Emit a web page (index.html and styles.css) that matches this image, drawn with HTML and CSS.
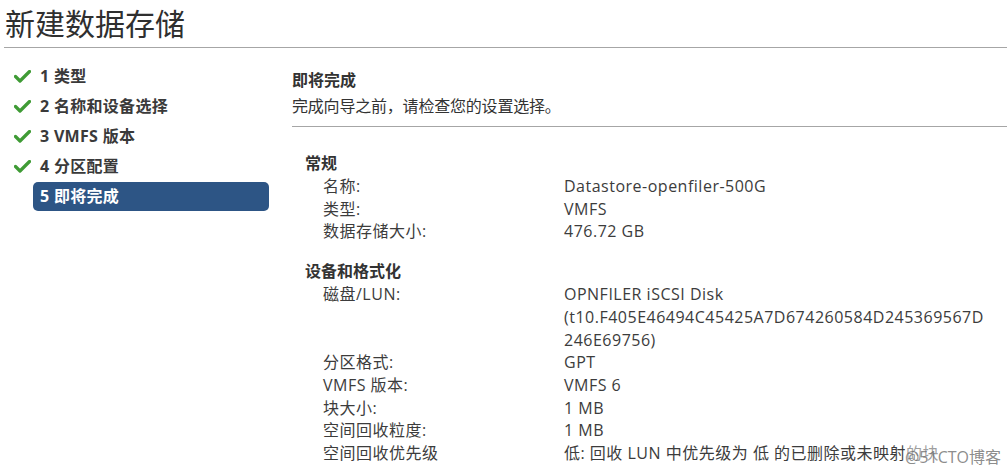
FILE: index.html
```html
<!DOCTYPE html>
<html>

<head>
    <title>新建数据存储</title>
    <meta charset="utf-8" />
    <link rel="stylesheet" href="styles.css">
</head>

<body>
    <div class="page">
        <div class="title">新建数据存储</div>
        <div class="main">
            <ul class="nav">
                <li class="nav-item">
                    <span class="check"><svg width="17" height="13" viewBox="0 0 17 13"><path d="M1.5 6.5 L6 11 L15.5 1.5" fill="none" stroke="#3f9b35" stroke-width="3.2" stroke-linecap="round" stroke-linejoin="round"/></svg></span>
                    <span class="label">1 类型</span>
                </li>
                <li class="nav-item">
                    <span class="check"><svg width="17" height="13" viewBox="0 0 17 13"><path d="M1.5 6.5 L6 11 L15.5 1.5" fill="none" stroke="#3f9b35" stroke-width="3.2" stroke-linecap="round" stroke-linejoin="round"/></svg></span>
                    <span class="label">2 名称和设备选择</span>
                </li>
                <li class="nav-item">
                    <span class="check"><svg width="17" height="13" viewBox="0 0 17 13"><path d="M1.5 6.5 L6 11 L15.5 1.5" fill="none" stroke="#3f9b35" stroke-width="3.2" stroke-linecap="round" stroke-linejoin="round"/></svg></span>
                    <span class="label">3 VMFS 版本</span>
                </li>
                <li class="nav-item">
                    <span class="check"><svg width="17" height="13" viewBox="0 0 17 13"><path d="M1.5 6.5 L6 11 L15.5 1.5" fill="none" stroke="#3f9b35" stroke-width="3.2" stroke-linecap="round" stroke-linejoin="round"/></svg></span>
                    <span class="label">4 分区配置</span>
                </li>
                <li class="nav-item active">
                    <span class="check"></span>
                    <span class="label">5 即将完成</span>
                </li>
            </ul>
            <div class="content">
                <div class="content-head">
                    <div class="head-title">即将完成</div>
                    <div class="head-sub">完成向导之前，请检查您的设置选择。</div>
                </div>
                <div class="content-body">
                    <div class="section">
                        <div class="section-title">常规</div>
                        <div class="row"><span class="key">名称:</span><span class="val">Datastore-openfiler-500G</span></div>
                        <div class="row"><span class="key">类型:</span><span class="val">VMFS</span></div>
                        <div class="row"><span class="key">数据存储大小:</span><span class="val">476.72 GB</span></div>
                    </div>
                    <div class="section">
                        <div class="section-title">设备和格式化</div>
                        <div class="row"><span class="key">磁盘/LUN:</span><span class="val">OPNFILER iSCSI Disk<br>(t10.F405E46494C45425A7D674260584D245369567D<br>246E69756)</span></div>
                        <div class="row"><span class="key">分区格式:</span><span class="val">GPT</span></div>
                        <div class="row"><span class="key">VMFS 版本:</span><span class="val">VMFS 6</span></div>
                        <div class="row"><span class="key">块大小:</span><span class="val">1 MB</span></div>
                        <div class="row"><span class="key">空间回收粒度:</span><span class="val">1 MB</span></div>
                        <div class="row"><span class="key">空间回收优先级</span><span class="val nowrap">低: 回收 LUN 中优先级为 低 的已删除或未映射的块</span></div>
                    </div>
                </div>
            </div>
        </div>
        <div class="watermark">@51CTO博客</div>
    </div>
</body>

</html>
```

FILE: styles.css
```css
html,
body {
    width: 100%;
    height: 100%;
    margin: 0;
}

body {
    font-family: "Open Sans", "Noto Sans CJK SC", sans-serif;
    color: #333;
    background-color: #fff;
    overflow: hidden;
}

.page {
    position: relative;
    width: 100%;
    height: 100%;
}

.title {
    height: 47px;
    line-height: 48px;
    margin-left: 4px;
    padding-left: 1px;
    font-size: 30px;
    color: #2f2f2f;
    border-bottom: 1px solid #a6a6a6;
}

.main {
    display: flex;
}

.nav {
    list-style: none;
    margin: 0;
    padding: 13px 0 0 0;
    width: 279px;
    flex-shrink: 0;
}

.nav-item {
    display: flex;
    align-items: center;
    height: 30px;
}

.nav-item .check {
    width: 33px;
    padding-left: 14px;
    box-sizing: border-box;
    display: flex;
    align-items: center;
}

.nav-item .label {
    flex: 1;
    margin-right: 10px;
    padding: 0 7px;
    height: 29px;
    line-height: 29px;
    font-size: 16px;
    font-weight: bold;
    letter-spacing: 0.3px;
    color: #3a3a3a;
    border-radius: 5px;
}

.nav-item.active .label {
    background-color: #2d5585;
    color: #fff;
}

.content {
    flex: 1;
}

.content-head {
    margin-left: 13px;
    padding: 20px 0 6px 0;
    border-bottom: 1px solid #a6a6a6;
}

.head-title {
    height: 24px;
    line-height: 24px;
    font-size: 16px;
    font-weight: bold;
}

.head-sub {
    height: 28px;
    line-height: 28px;
    font-size: 16px;
    letter-spacing: -0.2px;
}

.content-body {
    padding: 24px 0 0 26px;
}

.section {
    margin-bottom: 16px;
}

.section-title {
    height: 24px;
    line-height: 24px;
    font-size: 16px;
    font-weight: bold;
}

.row {
    display: flex;
    line-height: 22.7px;
    font-size: 16px;
    letter-spacing: 0.5px;
    color: #3c3c3c;
}

.row .key {
    width: 241px;
    padding-left: 18px;
    flex-shrink: 0;
}

.row .val {
    flex: 1;
}

.row .nowrap {
    white-space: nowrap;
}

.watermark {
    position: absolute;
    right: 6px;
    bottom: 3px;
    font-size: 16px;
    color: rgba(110, 110, 110, 0.8);
    background: rgba(255, 255, 255, 0.5);
}
```
